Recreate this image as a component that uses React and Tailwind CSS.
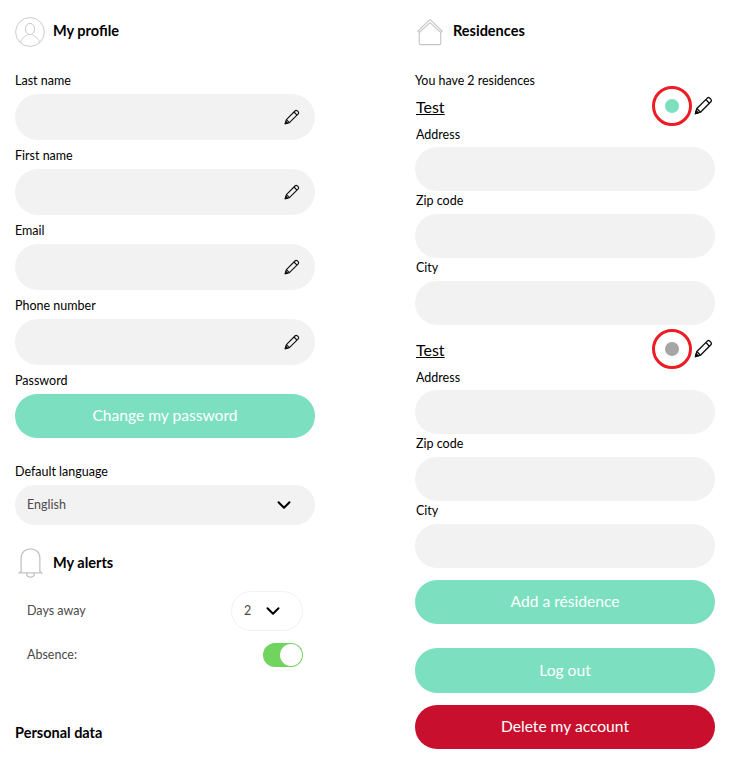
import { ChevronDown } from "lucide-react";

function Pencil({ className }) {
  return (
    <svg viewBox="0 0 18 18" fill="none" stroke="#111" strokeWidth="1.3" strokeLinejoin="round" className={className}>
      <path d="M1.4 16.6 L2.7 11.9 L12.6 2 Q13.6 1 14.8 1.9 L16.1 3.2 Q17 4.4 16 5.4 L6.1 15.3 Z" />
      <path d="M11.2 3.4 L14.6 6.8" />
      <path d="M2.7 11.9 L6.1 15.3" />
      <path d="M1.4 16.6 L2.1 14 L4 15.9 Z" fill="#111" />
    </svg>
  );
}

function SectionTitle({ icon, children, titleClass = "pb-[3px]" }) {
  return (
    <div className="flex h-[30px] items-center gap-2">
      <div className="flex w-[30px] justify-center">{icon}</div>
      <h2 className={`${titleClass} text-[14.5px] font-bold text-black`}>{children}</h2>
    </div>
  );
}

function ProfileField({ label }) {
  return (
    <div>
      <div className="flex h-[29px] items-start pt-[8px] text-[12.5px] leading-[16px] text-black">{label}</div>
      <div className="flex h-[46px] items-center justify-end rounded-[23px] bg-[#f2f2f2] pr-[15px]">
        <Pencil className="h-[16px] w-[16px]" />
      </div>
    </div>
  );
}

function PlainField({ label, labelClass = "pb-[2px]" }) {
  return (
    <div>
      <div className={`${labelClass} flex h-[23px] items-center pl-px text-[12.5px] text-black`}>{label}</div>
      <div className="h-[44px] rounded-[22px] bg-[#f2f2f2]" />
    </div>
  );
}

function Residence({ color, first }) {
  return (
    <div>
      <div className={`${first ? "" : "mt-[10px]"} flex h-[32px] items-center justify-between pb-[5px]`}>
        <span className="pl-px pt-[2px] text-[16px] text-black underline">Test</span>
        <div className="flex items-center">
          <div className="flex h-[40px] w-[40px] items-center justify-center rounded-full border-[3px] border-[#ed1c24]">
            <div className="h-[14px] w-[14px] rounded-full" style={{ backgroundColor: color }} />
          </div>
          <Pencil className="mx-[2px] h-[19px] w-[19px]" />
        </div>
      </div>
      <PlainField label="Address" labelClass="pb-0" />
      <PlainField label="Zip code" />
      <PlainField label="City" />
    </div>
  );
}

function GreenButton({ children, className = "" }) {
  return (
    <button className={`flex w-full items-center justify-center bg-[#7bdfc0] text-[15.6px] text-white ${className}`}>
      {children}
    </button>
  );
}

export default function App() {
  return (
    <div className="grid h-[766px] w-[731px] grid-cols-[300px_300px] gap-x-[100px] overflow-hidden bg-white pl-[15px] pt-[17px]" style={{ fontFamily: '"Lato", "Noto Sans", sans-serif' }}>
      <div>
        <SectionTitle
          icon={
            <svg viewBox="0 0 30 30" fill="none" stroke="#c4c4c4" strokeWidth="0.9" className="h-[30px] w-[30px]">
              <circle cx="15" cy="15" r="14.4" />
              <ellipse cx="15" cy="12" rx="4.6" ry="5.6" />
              <path d="M5.5 25.5 C7 20.5 10.5 19 12.5 18 M24.5 25.5 C23 20.5 19.5 19 17.5 18" />
            </svg>
          }
        >
          My profile
        </SectionTitle>
        <div className="mt-[18px]">
          <ProfileField label="Last name" />
          <ProfileField label="First name" />
          <ProfileField label="Email" />
          <ProfileField label="Phone number" />
        </div>
        <div className="flex h-[29px] items-start pt-[8px] text-[12.5px] leading-[16px] text-black">Password</div>
        <GreenButton className="h-[44px] rounded-[22px]">Change my password</GreenButton>

        <div className="mt-[24px] h-[23px] text-[12.5px] leading-[20px] text-black">Default language</div>
        <div className="flex h-[40px] items-center justify-between rounded-[20px] bg-[#f2f2f2] pl-[12px] pr-[20px]">
          <span className="pt-[1px] text-[12.5px] text-[#4a4a4a]">English</span>
          <ChevronDown className="h-[22px] w-[22px] text-black" strokeWidth={2.2} />
        </div>

        <div className="mt-[23px]">
          <SectionTitle
            titleClass="pb-[1px]"
            icon={
              <svg viewBox="0 0 26 32" fill="none" stroke="#c4c4c4" strokeWidth="1.4" className="h-[30px] w-[25px]">
                <path d="M3 25 V11 C3 4.5 7.5 1 13 1 C18.5 1 23 4.5 23 11 V25 L25 26.5 H1 Z" />
                <path d="M9 26.5 V28 C9 30 11 31 13 31 C15 31 17 30 17 28 V26.5" />
              </svg>
            }
          >
            My alerts
          </SectionTitle>
        </div>

        <div className="mt-[13px] flex items-center justify-between pl-[12px] pr-[12px]">
          <span className="pt-[1px] text-[12.5px] text-[#4a4a4a]">Days away</span>
          <div className="flex h-[40px] w-[72px] items-center gap-[11px] rounded-[20px] border border-[#f2f2f2] pl-[12px]">
            <span className="pt-[1px] text-[12.5px] text-[#4a4a4a]">2</span>
            <ChevronDown className="h-[22px] w-[22px] text-black" strokeWidth={2.2} />
          </div>
        </div>
        <div className="mt-[12px] flex items-center justify-between pl-[12px] pr-[12px]">
          <span className="pt-[1px] text-[12.5px] text-[#4a4a4a]">Absence:</span>
          <div className="flex h-[24px] w-[40px] items-center justify-end rounded-full bg-[#70d45f] pr-[1px]">
            <div className="h-[22px] w-[22px] rounded-full bg-white" />
          </div>
        </div>

        <h2 className="mt-[55px] text-[14.5px] font-bold text-black">Personal data</h2>
      </div>

      <div>
        <SectionTitle
          icon={
            <svg viewBox="0 0 30 30" fill="none" stroke="#c4c4c4" strokeWidth="1.2" className="h-[28px] w-[28px]">
              <path d="M2 14 L14.5 2 Q15 1.5 15.5 2 L28 14 L26.5 15.5 L15 5 L3.5 15.5 Z" />
              <path d="M3.5 15.5 V27 Q3.5 28.5 5 28.5 H25 Q26.5 28.5 26.5 27 V15.5" />
            </svg>
          }
        >
          Residences
        </SectionTitle>
        <div className="mt-[18px] flex h-[29px] items-start pt-[8px] text-[12.4px] leading-[16px] text-black">You have 2 residences</div>
        <div className="-mt-[2px]">
          <Residence color="#7bdfc0" first />
          <Residence color="#a6a6a6" />
        </div>
        <GreenButton className="mt-[12px] h-[44px] rounded-[22px]">Add a résidence</GreenButton>
        <GreenButton className="mt-[24px] h-[45px] rounded-[22px]">Log out</GreenButton>
        <button className="mt-[12px] flex h-[44px] w-full items-center justify-center rounded-[22px] bg-[#c8102e] text-[15.6px] text-white">
          Delete my account
        </button>
      </div>
    </div>
  );
}
